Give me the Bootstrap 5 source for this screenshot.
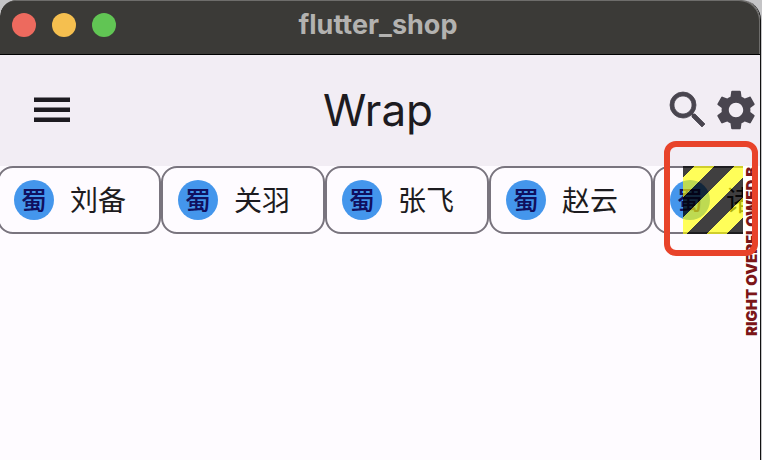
<!DOCTYPE html>
<html lang="zh-CN">
<head>
<meta charset="utf-8">
<meta name="viewport" content="width=device-width, initial-scale=1">
<title>flutter_shop</title>
<link href="https://cdn.jsdelivr.net/npm/bootstrap@5.3.0/dist/css/bootstrap.min.css" rel="stylesheet">
<script src="https://cdn.jsdelivr.net/npm/bootstrap@5.3.0/dist/js/bootstrap.bundle.min.js" defer></script>
<style>
  body { background: #c4c4c6; font-family: Inter, "Noto Sans CJK SC", sans-serif; color: #1d1b20; }
  .window { background: #fefbff; border-right: 1px solid #111; border-radius: 16px 20px 0 0; margin-right: 1px; }
  .titlebar { background: #3b3a37; border-bottom: 1px solid #000; border-radius: 16px 20px 0 0; box-shadow: inset -1px 1px 0 #6e6d6b; height: 55px; padding: 0 16px 4px 12px; }
  .lights { gap: 16px; }
  .light { width: 24px; height: 24px; border: 0; padding: 0; }
  .light-close { background: #ed6a5e; }
  .light-min { background: #f5bf4f; }
  .light-max { background: #61c554; }
  .side { flex: 1 1 0; }
  .win-title { font-size: 27px; line-height: 32px; font-weight: 700; color: #b3b2b0; }
  .appbar { background: #f2edf4; height: 111px; padding: 0 0 2px; }
  .appbar h1 { font-size: 44px; line-height: 56px; font-weight: 400; padding-right: 4px; }
  .tool { border: 0; background: none; padding: 0; color: #49454f; width: 48px; height: 48px; }
  .tool-menu { color: #1d1b20; margin-left: 28px; }
  .tool svg { display: block; width: 48px; height: 48px; }
  .chips { margin-left: -3px; margin-right: 17px; }
  .chip { flex: 0 0 164px; height: 68px; border: 2px solid #79747e; border-radius: 16px; padding: 0 15px; gap: 16px; font-size: 28px; line-height: 40px; }
  .chip-label { padding-top: 2px; }
  .face { width: 40px; height: 40px; background: #4496ec; color: #10105f; font-size: 26px; line-height: 42px; font-weight: 500; }
  .hazard { top: 0; right: 17px; bottom: 0; width: 60px; --ink: rgba(0,0,0,.75); --sun: rgba(255,255,0,.65);
    background: linear-gradient(135deg, var(--ink) 0 12.5%, var(--sun) 12.5% 37.5%, var(--ink) 37.5% 62.5%, var(--sun) 62.5% 87.5%, var(--ink) 87.5%) 2px 0 / 40px 40px; }
  .warn { top: 0; right: 0; width: 17px; height: 170px; background: #fff; color: #7c1618; font-size: 15px; line-height: 17px; font-weight: 900; writing-mode: vertical-rl; transform: rotate(180deg); }
  .marker { top: -25px; right: 2px; width: 94px; height: 115px; border: 6px solid #e8432a; border-radius: 12px; }
</style>
</head>
<body>
<div class="window min-vh-100 overflow-hidden d-flex flex-column">
  <header class="titlebar d-flex align-items-center">
    <div class="side lights d-flex">
      <button class="light light-close rounded-circle" type="button" aria-label="Close"></button>
      <button class="light light-min rounded-circle" type="button" aria-label="Minimize"></button>
      <button class="light light-max rounded-circle" type="button" aria-label="Zoom"></button>
    </div>
    <div class="win-title">flutter_shop</div>
    <div class="side"></div>
  </header>
  <nav class="appbar d-flex align-items-center">
    <div class="side d-flex">
      <button class="tool tool-menu" type="button" aria-label="Menu"><svg viewBox="0 0 24 24" fill="currentColor"><path d="M3 5.800h18v2.250H3zM3 10.800h18v2.250H3zM3 15.800h18v2.250H3z"/></svg></button>
    </div>
    <h1 class="m-0">Wrap</h1>
    <div class="side d-flex justify-content-end">
      <button class="tool" type="button" aria-label="Search"><svg viewBox="0 0 24 24" fill="currentColor" stroke="currentColor" stroke-width=".4"><path d="M15.5 14h-.79l-.28-.27A6.471 6.471 0 0 0 16 9.500 6.500 6.500 0 1 0 9.500 16c1.610 0 3.090-.59 4.230-1.570l.27.28v.79l5 4.990L20.490 19l-4.990-5zm-6 0C7.010 14 5 11.990 5 9.500S7.010 5 9.500 5 14 7.010 14 9.500 11.990 14 9.500 14z"/></svg></button>
      <button class="tool" type="button" aria-label="Settings"><svg viewBox="0 0 24 24" fill="currentColor"><path d="M19.140 12.940c.04-.3.06-.61.06-.94 0-.32-.02-.64-.07-.94l2.030-1.580c.18-.14.23-.41.12-.61l-1.920-3.320c-.12-.22-.37-.29-.59-.22l-2.390.96c-.5-.38-1.030-.7-1.620-.94L14.400 2.810c-.04-.24-.24-.41-.48-.41h-3.840c-.24 0-.43.17-.47.41L9.250 5.350c-.59.24-1.130.57-1.620.94l-2.390-.96c-.22-.08-.47 0-.59.22L2.740 8.870c-.12.21-.08.47.12.61l2.030 1.580c-.05.3-.09.63-.09.94s.02.64.07.94l-2.030 1.580c-.18.14-.23.41-.12.61l1.920 3.320c.12.22.37.29.59.22l2.390-.96c.5.38 1.030.7 1.620.94l.36 2.540c.05.24.24.41.48.41h3.840c.24 0 .44-.17.47-.41l.36-2.540c.59-.24 1.130-.56 1.620-.94l2.390.96c.22.08.47 0 .59-.22l1.920-3.320c.12-.22.07-.47-.12-.61l-2.010-1.580zM12 15.600c-1.980 0-3.600-1.620-3.600-3.600s1.620-3.600 3.600-3.600 3.600 1.620 3.600 3.600-1.620 3.600-3.600 3.600z"/></svg></button>
    </div>
  </nav>
  <main class="position-relative">
    <div class="position-relative">
      <div class="chips d-flex overflow-hidden">
        <div class="chip d-flex align-items-center"><span class="face rounded-circle text-center">蜀</span><span class="chip-label text-nowrap">刘备</span></div>
        <div class="chip d-flex align-items-center"><span class="face rounded-circle text-center">蜀</span><span class="chip-label text-nowrap">关羽</span></div>
        <div class="chip d-flex align-items-center"><span class="face rounded-circle text-center">蜀</span><span class="chip-label text-nowrap">张飞</span></div>
        <div class="chip d-flex align-items-center"><span class="face rounded-circle text-center">蜀</span><span class="chip-label text-nowrap">赵云</span></div>
        <div class="chip d-flex align-items-center"><span class="face rounded-circle text-center">蜀</span><span class="chip-label text-nowrap">诸葛</span></div>
      </div>
      <div class="hazard position-absolute"></div>
    </div>
    <div class="warn position-absolute overflow-hidden text-nowrap">RIGHT OVERFLOWED B</div>
    <div class="marker position-absolute"></div>
  </main>
</div>
</body>
</html>
